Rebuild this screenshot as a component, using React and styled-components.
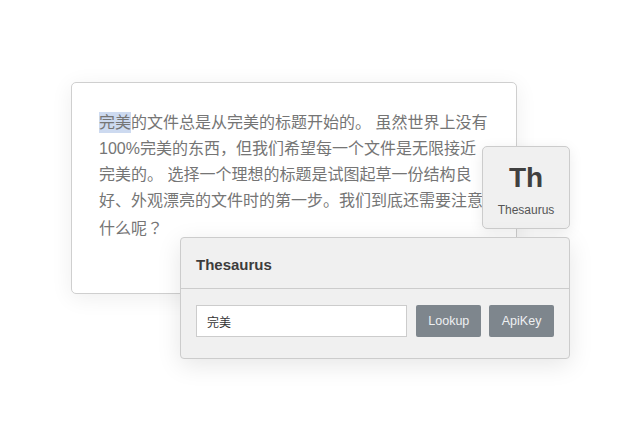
import React from "react";
import styled, { createGlobalStyle } from "styled-components";

const Global = createGlobalStyle`
  html, body { margin: 0; padding: 0; background: #ffffff; }
  body { font-family: "Liberation Sans", "Noto Sans CJK SC", sans-serif; }
  * { box-sizing: border-box; }
`;

const Stage = styled.div`
  position: relative;
  width: 640px;
  height: 440px;
  overflow: hidden;
  padding: 82px 0 0 71px;
`;

const Card = styled.div`
  width: 446px;
  height: 212px;
  padding: 27px;
  background: #fff;
  border: 1px solid #cfcfcf;
  border-radius: 5px;
  box-shadow: 0 4px 22px rgba(0, 0, 0, 0.07);
`;

const Body = styled.p`
  margin: 0;
  font-size: 16px;
  line-height: 26px;
  color: #757575;
  font-family: "Liberation Sans", "Noto Sans CJK SC", sans-serif;
`;

const Mark = styled.span`
  background: #cddaf0;
  padding: 2px 0;
`;

const Punct = styled.span`
  font-family: "Noto Sans CJK TC", sans-serif;
  text-spacing-trim: space-all;
`;

const ToolButton = styled.div`
  position: absolute;
  left: 482px;
  top: 146px;
  width: 88px;
  height: 83px;
  background: #f0f0f0;
  border: 1px solid #cccccc;
  border-radius: 5px;
  box-shadow: 0 3px 14px rgba(0, 0, 0, 0.08);
  display: flex;
  flex-direction: column;
  align-items: center;
  padding-top: 15px;
`;

const ToolGlyph = styled.div`
  font-size: 28px;
  font-weight: bold;
  line-height: 32px;
  color: #404040;
`;

const ToolLabel = styled.div`
  margin-top: 9px;
  font-size: 12px;
  line-height: 14px;
  color: #555;
`;

const Panel = styled.div`
  position: absolute;
  left: 180px;
  top: 237px;
  width: 390px;
  height: 122px;
  background: #f0f0f0;
  border: 1px solid #cccccc;
  border-radius: 4px;
  box-shadow: 0 6px 24px rgba(0, 0, 0, 0.1);
  display: flex;
  flex-direction: column;
`;

const PanelHeader = styled.div`
  height: 51px;
  border-bottom: 1px solid #cccccc;
  display: flex;
  align-items: center;
  padding: 2px 15px 0;
  font-size: 15px;
  font-weight: bold;
  color: #3c3c3c;
`;

const PanelBody = styled.div`
  display: flex;
  align-items: center;
  gap: 8px;
  padding: 16px 15px 0;
`;

const Field = styled.div`
  width: 212px;
  height: 32px;
  background: #fff;
  border: 1px solid #cccccc;
  display: flex;
  align-items: center;
  padding-left: 10px;
  font-size: 12px;
  color: #333;
  margin-right: 1px;
`;

const Button = styled.div`
  width: 65px;
  height: 32px;
  background: #7e868d;
  border-radius: 2px;
  display: flex;
  align-items: center;
  justify-content: center;
  font-size: 12.5px;
  color: #eef0f2;
`;

export default function App() {
  return (
    <>
      <Global />
      <Stage>
        <Card>
          <Body>
            <Mark>完美</Mark>的文件总是从完美的标题开始的。 虽然世界上没有100%完美的东西，但我们希望每一个文件是无限接近完美的。 选择一个理想的标题是试图起草一份结构良好、外观漂亮的文件时的第一步。我们到底还需要注意什么呢<Punct>？</Punct>
          </Body>
        </Card>
        <ToolButton>
          <ToolGlyph>Th</ToolGlyph>
          <ToolLabel>Thesaurus</ToolLabel>
        </ToolButton>
        <Panel>
          <PanelHeader>Thesaurus</PanelHeader>
          <PanelBody>
            <Field>完美</Field>
            <Button>Lookup</Button>
            <Button>ApiKey</Button>
          </PanelBody>
        </Panel>
      </Stage>
    </>
  );
}
